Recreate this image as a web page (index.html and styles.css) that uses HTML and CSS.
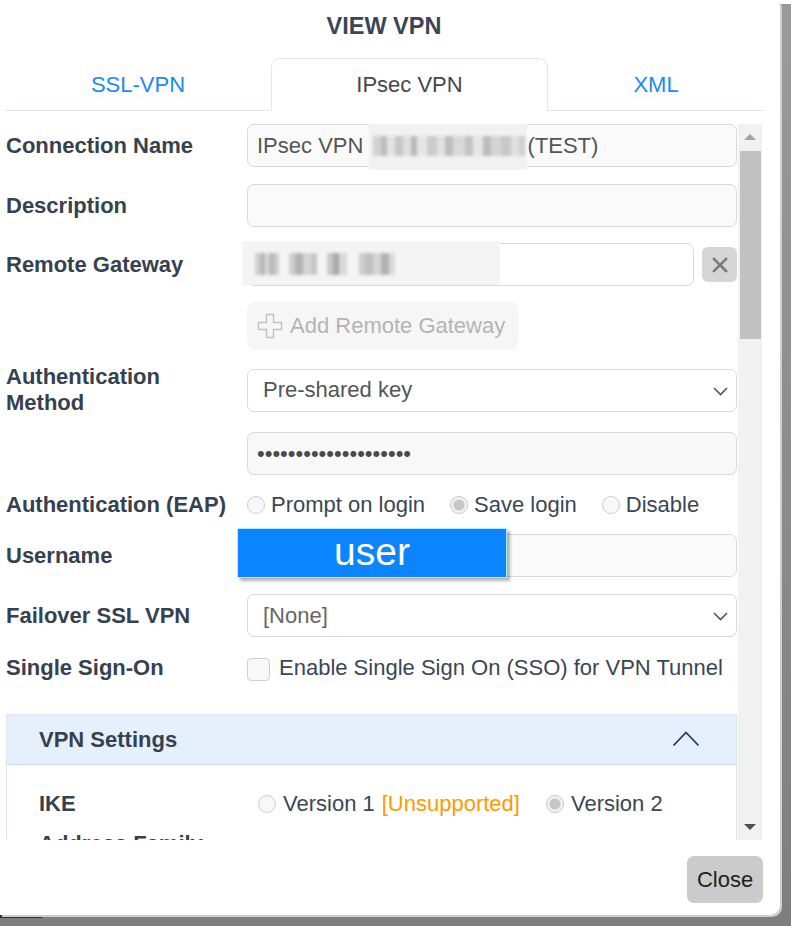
FILE: index.html
```html
<!DOCTYPE html>
<html>
<head>
<meta charset="utf-8">
<title>View VPN</title>
<link rel="stylesheet" href="styles.css">
</head>
<body>
<div class="screen">
  <div class="modal">
    <h1 class="title">VIEW VPN</h1>
    <div class="tabs">
      <div class="tab">SSL-VPN</div>
      <div class="tab active">IPsec VPN</div>
      <div class="tab">XML</div>
    </div>
    <div class="scroll">
      <div class="content">
        <div class="row r1">
          <div class="lbl">Connection Name</div>
          <div class="input">IPsec VPN&nbsp;<span class="blur-name"><span class="px px-name"></span></span>(TEST)</div>
        </div>
        <div class="row r2">
          <div class="lbl">Description</div>
          <div class="input"></div>
        </div>
        <div class="row r3">
          <div class="lbl">Remote Gateway</div>
          <div class="gw">
            <div class="input gw-input"><span class="blur-gw"><span class="px px-gw"></span></span></div>
            <button class="btn-x" type="button">
              <svg width="16" height="16" viewBox="0 0 16 16"><path d="M2 2 L14 14 M14 2 L2 14" stroke="#7a7a7a" stroke-width="2.6" stroke-linecap="square" fill="none"/></svg>
            </button>
          </div>
        </div>
        <div class="row r4">
          <div class="lbl"></div>
          <div><button class="btn-add" type="button">
            <svg width="26" height="26" viewBox="0 0 26 26"><path d="M9.5 1.5 H16.5 V9.5 H24.5 V16.5 H16.5 V24.5 H9.5 V16.5 H1.5 V9.5 H9.5 Z" fill="none" stroke="#c2c2c2" stroke-width="1.4"/></svg>
            <span>Add Remote Gateway</span>
          </button></div>
        </div>
        <div class="row r5">
          <div class="lbl">Authentication<br>Method</div>
          <div class="input select">Pre-shared key
            <svg class="chev" width="15" height="9" viewBox="0 0 15 9"><path d="M1 1 L7.5 7.5 L14 1" stroke="#555" stroke-width="1.6" fill="none"/></svg>
          </div>
        </div>
        <div class="row r6">
          <div class="lbl"></div>
          <div class="input pw">••••••••••••••••••••</div>
        </div>
        <div class="row r7">
          <div class="lbl">Authentication (EAP)</div>
          <div class="radios">
            <span class="opt"><span class="radio"></span>Prompt on login</span>
            <span class="opt"><span class="radio checked"></span>Save login</span>
            <span class="opt"><span class="radio"></span>Disable</span>
          </div>
        </div>
        <div class="row r8">
          <div class="lbl">Username</div>
          <div class="input"></div>
          <div class="user-overlay">user</div>
        </div>
        <div class="row r9">
          <div class="lbl">Failover SSL VPN</div>
          <div class="input select none">[None]
            <svg class="chev" width="15" height="9" viewBox="0 0 15 9"><path d="M1 1 L7.5 7.5 L14 1" stroke="#555" stroke-width="1.6" fill="none"/></svg>
          </div>
        </div>
        <div class="row r10">
          <div class="lbl">Single Sign-On</div>
          <div class="check-line"><span class="checkbox"></span>Enable Single Sign On (SSO) for VPN Tunnel</div>
        </div>
        <div class="panel">
          <div class="panel-head">
            <span>VPN Settings</span>
            <svg width="28" height="17" viewBox="0 0 28 17"><path d="M1.5 15.5 L14 2.5 L26.5 15.5" stroke="#1c3b6c" stroke-width="1.8" fill="none"/></svg>
          </div>
          <div class="panel-body">
            <div class="prow">
              <div class="lbl">IKE</div>
              <div class="radios ike">
                <span class="opt"><span class="radio"></span>Version 1 <span class="warn">[Unsupported]</span></span>
                <span class="opt"><span class="radio checked"></span>Version 2</span>
              </div>
            </div>
            <div class="prow prow2">
              <div class="lbl">Address Family</div>
              <div></div>
            </div>
          </div>
        </div>
      </div>
      <div class="scrollbar">
        <div class="sb-btn"><span class="tri-up"></span></div>
        <div class="sb-thumb"></div>
        <div class="sb-space"></div>
        <div class="sb-btn"><span class="tri-down"></span></div>
      </div>
    </div>
    <div class="footer">
      <button class="btn-close" type="button">Close</button>
    </div>
  </div>
</div>
</body>
</html>
```

FILE: styles.css
```css
* { box-sizing: border-box; }
html, body { margin: 0; padding: 0; background: #fff; }
body { font-family: "Liberation Sans", Arial, sans-serif; }

.screen {
  width: 791px;
  height: 926px;
  padding: 0 11px 11px 0;
  background:
    linear-gradient(#0d3a5c, #0d3a5c) 0 914px / 42px 4px no-repeat,
    linear-gradient(to bottom, #fff 0, #fff 4px, transparent 4px),
    linear-gradient(to bottom, #9a9a9a, #7e7e7e);
  overflow: hidden;
}
.modal {
  width: 780px;
  height: 915px;
  background: #fff;
  border-radius: 0 6px 10px 0;
  box-shadow: 2px 2px 0 #cfcfcf;
  display: flex;
  flex-direction: column;
}
.title {
  margin: 0;
  height: 52px;
  line-height: 52px;
  padding-right: 12px;
  text-align: center;
  font-size: 23.5px;
  font-weight: bold;
  color: #3a4557;
}
.tabs {
  margin: 6px 16px 0 5px;
  height: 53px;
  display: grid;
  grid-template-columns: 266px 277px 1fr;
  border-bottom: 1px solid #e1e6ec;
}
.tab {
  display: flex;
  align-items: center;
  justify-content: center;
  font-size: 22px;
  color: #1a8af8;
}
.tab.active {
  color: #474747;
  border: 1px solid #e1e6ec;
  border-bottom: none;
  border-radius: 9px 9px 0 0;
  background: #fff;
  height: 53px;
}

.scroll {
  margin: 13px 0 0 5px;
  width: 757px;
  height: 716px;
  display: flex;
}
.content {
  width: 733px;
  height: 716px;
  overflow: hidden;
}
.scrollbar {
  width: 24px;
  background: #f1f1f1;
  display: flex;
  flex-direction: column;
  align-items: center;
}
.sb-btn {
  height: 26px;
  width: 100%;
  display: flex;
  align-items: center;
  justify-content: center;
}
.tri-up {
  width: 0; height: 0;
  border-left: 6px solid transparent;
  border-right: 6px solid transparent;
  border-bottom: 6px solid #a3a3a3;
}
.tri-down {
  width: 0; height: 0;
  border-left: 6px solid transparent;
  border-right: 6px solid transparent;
  border-top: 6px solid #505050;
}
.sb-thumb {
  width: 21px;
  height: 188px;
  margin-top: 1px;
  background: #c1c1c1;
}
.sb-space { flex: 1; }

.row {
  position: relative;
  display: grid;
  grid-template-columns: 242px 490px;
  align-items: center;
}
.lbl {
  padding-left: 1px;
  font-size: 22px;
  line-height: 26px;
  font-weight: bold;
  color: #36414f;
}
.r2 { margin-top: 17px; }
.r3 { margin-top: 16px; }
.r4 { margin-top: 16px; }
.r5 { margin-top: 14px; height: 52px; }
.r6 { margin-top: 16px; }
.r7 { margin-top: 17px; height: 26px; }
.r8 { margin-top: 16px; }
.r9 { margin-top: 17px; }
.r10 { margin-top: 18px; height: 25px; }

.input {
  position: relative;
  height: 43px;
  border: 1px solid #d9d9d9;
  border-radius: 7px;
  background: #fafafa;
  padding: 0 9px;
  display: flex;
  align-items: center;
  font-size: 22px;
  color: #555;
  white-space: nowrap;
}
.select {
  background: #fff;
  padding-left: 15px;
}
.select.none { color: #666; }
.chev {
  position: absolute;
  right: 8px;
  top: 17px;
}
.pw {
  color: #4a4a4a;
  background: #f8f8f8;
}

.blur-name {
  position: relative;
  display: inline-block;
  width: 158px;
  height: 20px;
}
.blur-name::before {
  content: "";
  position: absolute;
  left: 0;
  right: 0;
  top: -13px;
  bottom: -14px;
  background: #f1f1f1;
}
.px {
  position: absolute;
  filter: blur(1.4px);
}
.px-name {
  left: 4px;
  top: 0;
  width: 152px;
  height: 20px;
  background:
    linear-gradient(90deg, #d2d2d2 0 8px, #bdbdbd 8px 14px, #e2e2e2 14px 22px, #c6c6c6 22px 30px, #dedede 30px 38px, #b9b9b9 38px 44px, #e6e6e6 44px 54px, #cccccc 54px 64px, #e1e1e1 64px 72px, #bebebe 72px 80px, #d9d9d9 80px 92px, #c3c3c3 92px 100px, #e5e5e5 100px 110px, #bcbcbc 110px 118px, #d5d5d5 118px 128px, #c8c8c8 128px 138px, #e0e0e0 138px 146px, #cfcfcf 146px 152px);
}

.gw {
  display: flex;
  align-items: center;
  gap: 8px;
}
.gw-input {
  width: 447px;
  background: #fff;
}
.blur-gw {
  position: absolute;
  left: -6px;
  top: -3px;
  width: 258px;
  height: 47px;
  background: linear-gradient(to bottom, #f4f4f4 0, #f4f4f4 44px, transparent 44px);
}
.px-gw {
  left: 13px;
  top: 12px;
  width: 160px;
  height: 22px;
  background:
    linear-gradient(90deg, #d0d0d0 0 5px, #b7b7b7 5px 10px, #d6d6d6 10px 14px, #bbbbbb 14px 20px, #cfcfcf 20px 24px, #f4f4f4 24px 34px, #cfcfcf 34px 40px, #b2b2b2 40px 48px, #d5d5d5 48px 56px, #c6c6c6 56px 62px, #f4f4f4 62px 72px, #c9c9c9 72px 78px, #a9a9a9 78px 84px, #d8d8d8 84px 92px, #f4f4f4 92px 104px, #cccccc 104px 110px, #bfbfbf 110px 118px, #d4d4d4 118px 126px, #b3b3b3 126px 134px, #dadada 134px 140px, #f4f4f4 140px 160px);
}
.btn-x {
  width: 35px;
  height: 35px;
  border: none;
  border-radius: 6px;
  background: #d6d6d6;
  display: flex;
  align-items: center;
  justify-content: center;
  padding: 0;
}

.btn-add {
  height: 48px;
  width: 272px;
  border: none;
  border-radius: 8px;
  background: #f6f6f6;
  display: flex;
  align-items: center;
  gap: 7px;
  padding: 0 0 0 10px;
  font-family: "Liberation Sans", Arial, sans-serif;
  font-size: 22px;
  color: #b4b4b4;
}

.radios {
  display: flex;
  align-items: center;
  gap: 25px;
  font-size: 22px;
  color: #3b4655;
  white-space: nowrap;
}
.opt {
  display: flex;
  align-items: center;
  gap: 6px;
}
.radio {
  width: 18px;
  height: 18px;
  border: 1px solid #cdcdcd;
  border-radius: 50%;
  background: #f8f8f8;
  flex: none;
}
.radio.checked {
  background: radial-gradient(circle, #c6c6c6 0, #c6c6c6 5px, #f2f2f2 6px);
  border-color: #c9c9c9;
}

.user-overlay {
  position: absolute;
  left: 232px;
  top: -6px;
  width: 270px;
  height: 50px;
  background: #0a84ff;
  border: 1px solid #a8f2ff;
  box-shadow: 3px 3px 3px rgba(0, 0, 0, 0.3);
  color: #fff;
  font-size: 39px;
  line-height: 46px;
  text-align: center;
}

.check-line {
  display: flex;
  align-items: center;
  gap: 9px;
  font-size: 22px;
  color: #3b4655;
  white-space: nowrap;
}
.checkbox {
  width: 23px;
  height: 23px;
  border: 1px solid #d0d0d0;
  border-radius: 4px;
  background: #f8f8f8;
  flex: none;
  margin-top: 2px;
}

.panel {
  margin: 34px 0 0 1px;
  width: 731px;
  border: 1px solid #dde4ec;
  border-bottom: none;
}
.panel-head {
  height: 50px;
  background: #e6f0fd;
  border-bottom: 1px solid #cbd7e6;
  display: flex;
  align-items: center;
  justify-content: space-between;
  padding: 0 36px 0 32px;
  font-size: 22px;
  font-weight: bold;
  color: #36414f;
}
.panel-head svg { margin-top: -2px; }
.panel-body {
  padding: 26px 0 40px 32px;
}
.prow {
  display: grid;
  grid-template-columns: 219px 1fr;
  align-items: center;
  height: 26px;
}
.prow .lbl { padding-left: 0; }
.prow2 { margin-top: 14px; }
.ike { gap: 26px; }
.ike .opt { gap: 7px; }
.warn { color: #ff9a00; }

.footer {
  flex: 1;
  display: flex;
  justify-content: flex-end;
  align-items: flex-start;
  padding: 16px 17px 0 0;
}
.btn-close {
  width: 76px;
  height: 47px;
  border: none;
  border-radius: 7px;
  background: #cbcbcb;
  font-family: "Liberation Sans", Arial, sans-serif;
  font-size: 22px;
  color: #222;
  padding: 0;
}
```
